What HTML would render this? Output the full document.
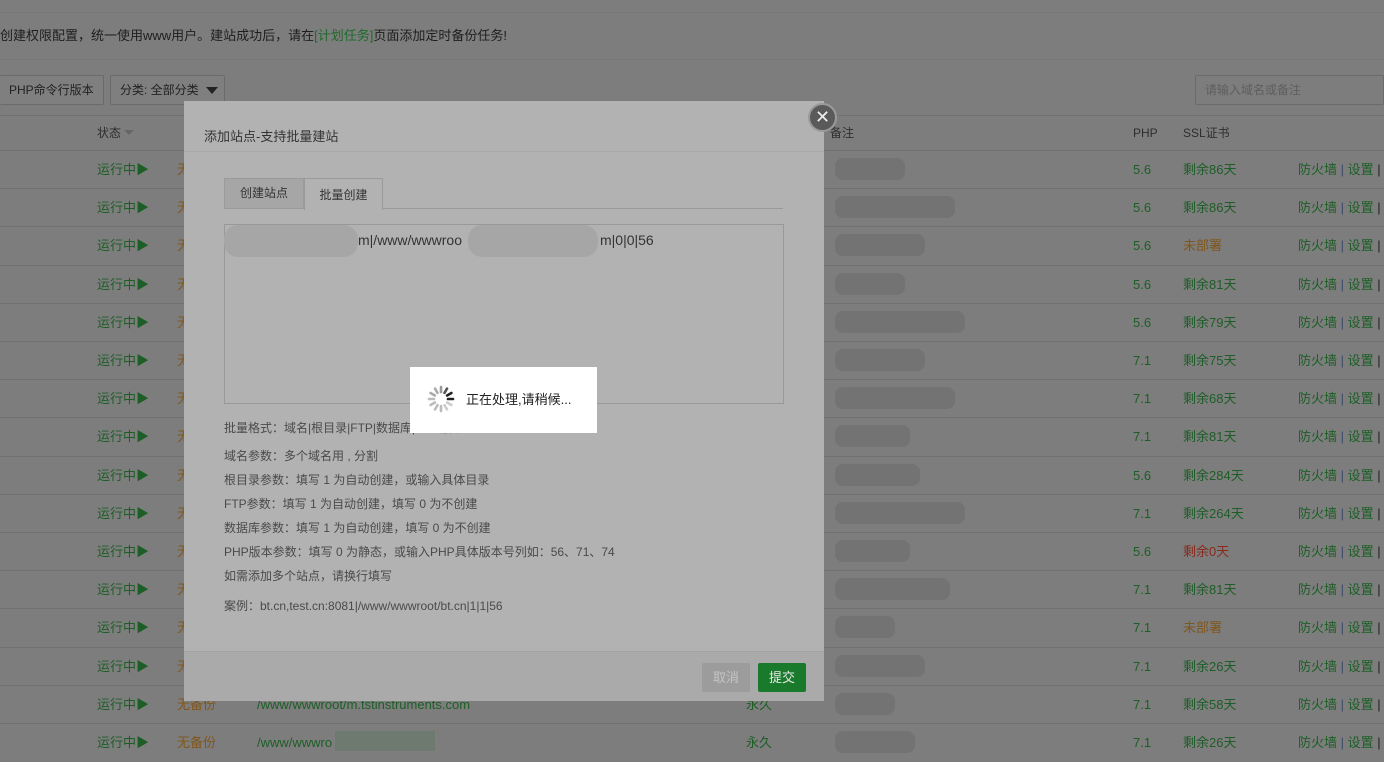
<!DOCTYPE html>
<html><head><meta charset="utf-8"><style>
*{margin:0;padding:0;box-sizing:border-box}
body{width:1384px;height:762px;overflow:hidden;background:#7d7d7d;font-family:"Liberation Sans","Noto Sans CJK SC",sans-serif;font-size:13px;line-height:16px;color:#2a2a2a;position:relative}
.a{position:absolute;white-space:nowrap}
.line{position:absolute;left:0;width:1384px;height:1px;background:#717171}
.g{color:#1d5e26}.o{color:#80561a}.r{color:#8a2a1a}
.btn{position:absolute;border:1px solid #6a6a6a;border-radius:2px;background:#7f7f7f;height:30px;line-height:28px;padding:0 9px;font-size:12px;color:#222}
.blur{position:absolute;background:#737373;border-radius:8px}
.dlg{position:absolute;left:184px;top:101px;width:640px;height:600px;background:#b2b2b2}
.dt{font-size:13px;color:#333}
.p{position:absolute;left:40px;font-size:12px;color:#4a4a4a;white-space:nowrap}
</style></head><body>
<div class="line" style="top:12px;background:#777"></div>
<div class="a" style="left:0;top:28px;font-size:13px;color:#1e1e1e">创建权限配置，统一使用www用户。建站成功后，请在<span style="color:#1d6b2b">[计划任务]</span>页面添加定时备份任务!</div>
<div class="line" style="top:59px;background:#777"></div>
<div class="btn" style="left:0;top:75px;border-left:none;">PHP命令行版本</div>
<div class="btn" style="left:110px;top:75px;width:115px;">分类: 全部分类 <span style="position:absolute;right:6px;top:11px;border:6px solid transparent;border-top:7px solid #222;border-bottom:0"></span></div>
<div class="a" style="left:1195px;top:75px;width:189px;height:30px;border:1px solid #6a6a6a;border-radius:2px;line-height:28px;padding-left:9px;color:#5e5e5e;font-size:12px">请输入域名或备注</div>
<div class="line" style="top:115px"></div>
<div class="a" style="left:97px;top:125px;color:#2e2e2e;font-size:12px">状态 <span style="display:inline-block;border:5px solid transparent;border-top:5px solid #666;vertical-align:-3px"></span></div>
<div class="a" style="left:830px;top:125px;color:#2e2e2e;font-size:12px">备注</div>
<div class="a" style="left:1133px;top:125px;color:#2e2e2e;font-size:12px">PHP</div>
<div class="a" style="left:1183px;top:125px;color:#2e2e2e;font-size:12px">SSL证书</div>
<div id="rows"></div>
<script>
var php=["5.6","5.6","5.6","5.6","5.6","7.1","7.1","7.1","5.6","7.1","5.6","7.1","7.1","7.1","7.1","7.1"];
var ssl=[["剩余86天","g"],["剩余86天","g"],["未部署","o"],["剩余81天","g"],["剩余79天","g"],["剩余75天","g"],["剩余68天","g"],["剩余81天","g"],["剩余284天","g"],["剩余264天","g"],["剩余0天","r"],["剩余81天","g"],["未部署","o"],["剩余26天","g"],["剩余58天","g"],["剩余26天","g"]];
var bw=[70,120,90,70,130,90,120,75,85,130,75,115,60,90,60,80];
var h="";
for(var i=0;i<16;i++){var y=Math.round(150+i*38.2);var t=y+12;
h+='<div class="line" style="top:'+y+'px"></div>';
h+='<div class="a g" style="left:97px;top:'+t+'px">运行中▶</div>';
h+='<div class="a o" style="left:177px;top:'+t+'px">无备份</div>';
h+='<div class="blur" style="left:835px;top:'+(y+8)+'px;width:'+bw[i]+'px;height:22px"></div>';
h+='<div class="a g" style="left:1133px;top:'+t+'px">'+php[i]+'</div>';
h+='<div class="a '+ssl[i][1]+'" style="left:1183px;top:'+t+'px">'+ssl[i][0]+'</div>';
h+='<div class="a g" style="left:1298px;top:'+t+'px">防火墙 <span style="color:#3a4a6a">|</span> 设置 <span style="color:#222">|</span></div>';}
var y14=Math.round(150+14*38.2),y15=Math.round(150+15*38.2);
h+='<div class="a g" style="left:257px;top:'+(y14+12)+'px">/www/wwwroot/m.tstinstruments.com</div>';
h+='<div class="a g" style="left:746px;top:'+(y14+12)+'px">永久</div>';
h+='<div class="a g" style="left:257px;top:'+(y15+12)+'px">/www/wwwro</div>';
h+='<div class="a" style="left:335px;top:'+(y15+8)+'px;width:100px;height:20px;background:#6e7a70"></div>';
h+='<div class="a g" style="left:746px;top:'+(y15+12)+'px">永久</div>';
document.getElementById("rows").innerHTML=h;
</script>
<div class="dlg">
 <div class="a dt" style="left:20px;top:28px">添加站点-支持批量建站</div>
 <div style="position:absolute;left:0;top:50px;width:640px;height:1px;background:#a8a8a8"></div>
 <div style="position:absolute;left:40px;top:77px;width:80px;height:31px;border:1px solid #9a9a9a;background:#a6a6a6;line-height:29px;text-align:center;color:#333;font-size:12px">创建站点</div>
 <div style="position:absolute;left:120px;top:77px;width:79px;height:32px;border:1px solid #9a9a9a;border-bottom:none;background:#b2b2b2;line-height:32px;text-align:center;color:#333;font-size:12px">批量创建</div>
 <div style="position:absolute;left:199px;top:107px;width:400px;height:1px;background:#9a9a9a"></div>
 <div style="position:absolute;left:40px;top:123px;width:560px;height:180px;border:1px solid #999;background:#b2b2b2"></div>
 <div class="a" style="left:40px;top:124px;width:134px;height:32px;background:#a6a6a6;border-radius:14px"></div>
 <div class="a" style="left:284px;top:124px;width:130px;height:32px;background:#a6a6a6;border-radius:14px"></div>
 <div class="a" style="left:174px;top:131px;font-size:14px;color:#333">m|/www/wwwroo</div>
 <div class="a" style="left:416px;top:131px;font-size:14px;color:#333">m|0|0|56</div>
 <div class="p" style="top:319px">批量格式：域名|根目录|FTP|数据库|PHP版本</div>
 <div class="p" style="top:347px">域名参数：多个域名用 , 分割</div>
 <div class="p" style="top:371px">根目录参数：填写 1 为自动创建，或输入具体目录</div>
 <div class="p" style="top:395px">FTP参数：填写 1 为自动创建，填写 0 为不创建</div>
 <div class="p" style="top:419px">数据库参数：填写 1 为自动创建，填写 0 为不创建</div>
 <div class="p" style="top:443px">PHP版本参数：填写 0 为静态，或输入PHP具体版本号列如：56、71、74</div>
 <div class="p" style="top:467px">如需添加多个站点，请换行填写</div>
 <div class="p" style="top:497px">案例：bt.cn,test.cn:8081|/www/wwwroot/bt.cn|1|1|56</div>
 <div style="position:absolute;left:0;top:550px;width:640px;height:50px;background:#aaaaaa;border-top:1px solid #a2a2a2"></div>
 <div style="position:absolute;left:518px;top:562px;width:48px;height:29px;background:#9c9c9c;border-radius:2px;color:#c4c4c4;line-height:29px;text-align:center">取消</div>
 <div style="position:absolute;left:574px;top:562px;width:48px;height:29px;background:#1a7a2c;border-radius:2px;color:#e8e8e8;line-height:29px;text-align:center">提交</div>
</div>
<div style="position:absolute;left:808px;top:103px;width:29px;height:29px;border-radius:50%;background:#5a5a5a;border:2px solid #9a9a9a;color:#eee;font-size:18px;line-height:24px;text-align:center">✕</div>
<div style="position:absolute;left:410px;top:367px;width:187px;height:66px;background:#fff">
 <svg style="position:absolute;left:16px;top:17px" width="30" height="30" viewBox="0 0 30 30">
  <g stroke-width="2.6" stroke-linecap="round">
   <line x1="15" y1="3" x2="15" y2="8" stroke="#999"/>
   <line x1="21" y1="4.6" x2="18.5" y2="8.9" stroke="#555"/>
   <line x1="25.4" y1="9" x2="21.1" y2="11.5" stroke="#222"/>
   <line x1="27" y1="15" x2="22" y2="15" stroke="#222"/>
   <line x1="25.4" y1="21" x2="21.1" y2="18.5" stroke="#ccc"/>
   <line x1="21" y1="25.4" x2="18.5" y2="21.1" stroke="#ccc"/>
   <line x1="15" y1="27" x2="15" y2="22" stroke="#bbb"/>
   <line x1="9" y1="25.4" x2="11.5" y2="21.1" stroke="#bbb"/>
   <line x1="4.6" y1="21" x2="8.9" y2="18.5" stroke="#bbb"/>
   <line x1="3" y1="15" x2="8" y2="15" stroke="#bbb"/>
   <line x1="4.6" y1="9" x2="8.9" y2="11.5" stroke="#aaa"/>
   <line x1="9" y1="4.6" x2="11.5" y2="8.9" stroke="#aaa"/>
  </g></svg>
 <div class="a" style="left:56px;top:25px;font-size:13px;color:#222">正在处理,请稍候...</div>
</div>
</body></html>
